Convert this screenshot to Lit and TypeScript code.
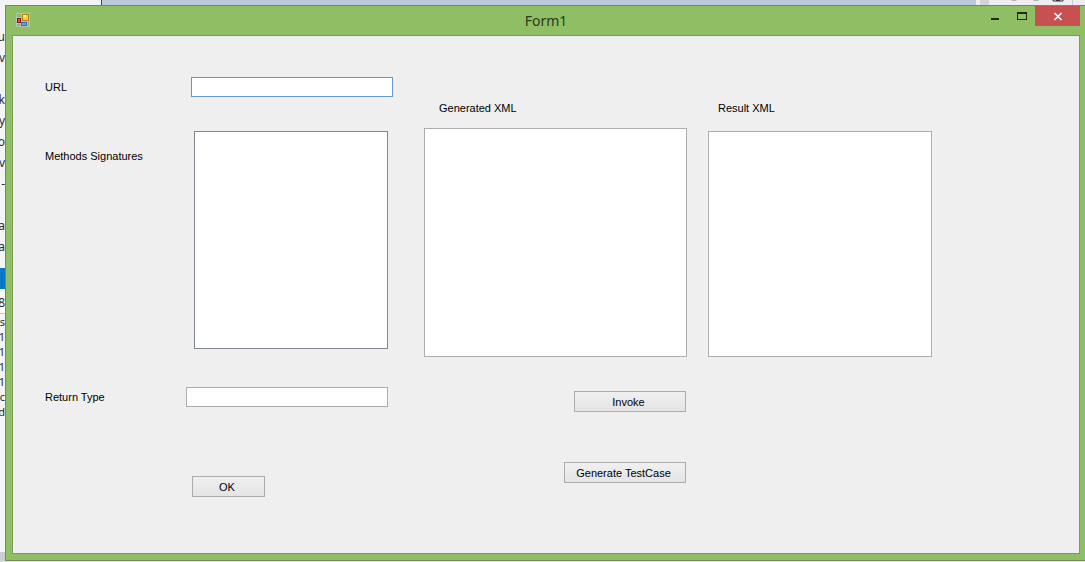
import { LitElement, html, css } from "lit";
import { customElement } from "lit/decorators.js";

@customElement("backdrop-edge")
class BackdropEdge extends LitElement {
  static styles = css`
    :host {
      display: flex;
      flex-direction: column;
      overflow: hidden;
      background: #f3f4f6;
      font: 12px/21px "Noto Sans", sans-serif;
      color: #2b2b33;
    }
    .menu {
      display: flex;
      flex-direction: column;
      align-items: flex-end;
      padding-top: 21px;
      height: 242px;
    }
    .line {
      height: 21px;
      white-space: pre;
    }
    .selected {
      height: 21px;
      background: #0a78c8;
    }
    .field {
      display: flex;
      justify-content: flex-end;
      height: 21px;
      margin-top: 3px;
      line-height: 21px;
      background: #ffffff;
      border-bottom: 1px solid #c8c8cc;
    }
    .log {
      display: flex;
      flex: 1;
      flex-direction: column;
      align-items: flex-end;
      line-height: 15px;
      font-size: 11px;
    }
    .log .line {
      height: 15px;
    }
    .status {
      height: 9px;
      background: #cbccd4;
    }
  `;

  render() {
    const menu = ["u", "v", " ", "k", "ry", "ro", "ov", "-", " ", "a", "a"];
    const log = ["s", "1", "1", "1", "1", "c", "d"];
    return html`
      <div class="menu">${menu.map((t) => html`<span class="line">${t}</span>`)}</div>
      <div class="selected"></div>
      <div class="field">8</div>
      <div class="log">${log.map((t) => html`<span class="line">${t}</span>`)}</div>
      <div class="status"></div>
    `;
  }
}

@customElement("title-bar")
class TitleBar extends LitElement {
  static styles = css`
    :host {
      display: grid;
      grid-template-columns: 1fr auto 1fr;
      align-items: start;
      height: 29px;
      padding-right: 5px;
    }
    .icon {
      display: block;
      margin: 7px 0 0 4px;
    }
    .title {
      margin: 0;
      font: 14px/30px "Noto Sans", sans-serif;
      color: #2b3a1c;
    }
    .controls {
      display: flex;
      justify-content: flex-end;
    }
    .control {
      width: 27px;
      height: 20px;
      padding: 0;
      border: 0;
      background: transparent;
    }
    .control svg {
      display: block;
      margin: 0 auto;
    }
    .close {
      width: 45px;
      background: #c75050;
    }
  `;

  render() {
    return html`
      <svg class="icon" width="14" height="14" viewBox="0 0 14 14" aria-hidden="true">
        <rect width="14" height="14" fill="#b9c4ae" />
        <rect x="1" y="1" width="4" height="3" fill="#8fb573" />
        <rect x="1" y="11" width="3" height="2" fill="#8fb573" />
        <rect x="12" y="9" width="1" height="4" fill="#8fb573" />
        <rect x="1.5" y="5.5" width="3" height="4" fill="#d05a50" stroke="#7c1a1a" />
        <rect x="6.5" y="1.5" width="6" height="6" fill="#f8cf3c" stroke="#b07c14" />
        <rect x="7" y="2" width="3" height="2" fill="#ffeb90" />
        <rect x="5.5" y="9.5" width="5" height="3" fill="#6aa4ee" stroke="#3468bc" />
      </svg>
      <h1 class="title">Form1</h1>
      <div class="controls">
        <button class="control" aria-label="Minimize">
          <svg width="27" height="20" viewBox="0 0 27 20"><rect x="10" y="12" width="8" height="2" fill="#1f2a14" /></svg>
        </button>
        <button class="control" aria-label="Maximize">
          <svg width="27" height="20" viewBox="0 0 27 20">
            <path d="M9 6H19V14H9ZM10 8V13H18V8Z" fill="#1f2a14" fill-rule="evenodd" />
          </svg>
        </button>
        <button class="control close" aria-label="Close">
          <svg width="45" height="20" viewBox="0 0 45 20">
            <path d="M19.500 7L26.500 14M26.500 7L19.500 14" stroke="#ffffff" stroke-width="1.600" />
          </svg>
        </button>
      </div>
    `;
  }
}

@customElement("request-form")
class RequestForm extends LitElement {
  static styles = css`
    :host {
      display: block;
      background: #efefef;
      border: 1px solid #7a9c58;
      font: 11px/16px "Liberation Sans", sans-serif;
      color: #000000;
    }
    .form {
      display: flex;
      align-items: flex-start;
      padding: 41px 32px;
    }
    .request {
      display: grid;
      grid-template-columns: 141px 1fr;
      width: 348px;
    }
    .column {
      display: flex;
      flex-direction: column;
      padding-top: 23px;
    }
    .generated {
      width: 263px;
      margin-left: 31px;
    }
    .result {
      width: 224px;
      margin-left: 21px;
    }
    label {
      align-self: start;
      padding-top: 2px;
    }
    .column label {
      padding: 0 0 12px 15px;
    }
    .column.result label {
      padding: 0 0 15px 10px;
    }
    input,
    select,
    textarea {
      box-sizing: border-box;
      margin: 0;
      padding: 2px;
      border: 1px solid #abadb3;
      border-radius: 0;
      background: #ffffff;
      font: inherit;
      outline: none;
      resize: none;
    }
    input {
      width: 202px;
      height: 20px;
    }
    .url {
      margin-left: 5px;
      border-color: #6299cc;
    }
    .methods-label {
      padding-top: 51px;
    }
    .methods {
      width: 194px;
      height: 218px;
      margin: 34px 0 0 8px;
      border-color: #828790;
    }
    .return-label,
    .return {
      margin-top: 38px;
    }
    .generated-xml {
      height: 229px;
    }
    .result-xml {
      height: 226px;
    }
    .button {
      box-sizing: border-box;
      height: 21px;
      padding: 0 3px 0 0;
      border: 1px solid #acacac;
      background: linear-gradient(#f0f0f0, #e4e4e4);
      color: inherit;
      font: inherit;
    }
    .ok {
      grid-column: 2;
      width: 73px;
      margin: 69px 0 0 6px;
    }
    .invoke {
      align-self: flex-end;
      width: 112px;
      margin: 34px 1px 0 0;
    }
    .generate {
      align-self: flex-end;
      width: 122px;
      margin: 50px 1px 0 0;
    }
  `;

  render() {
    return html`
      <form class="form" @submit=${(e: Event) => e.preventDefault()}>
        <div class="request">
          <label for="url">URL</label>
          <input class="url" id="url" type="text" />
          <label class="methods-label" for="methods">Methods Signatures</label>
          <select class="methods" id="methods" size="8"></select>
          <label class="return-label" for="return">Return Type</label>
          <input class="return" id="return" type="text" />
          <button class="button ok">OK</button>
        </div>
        <div class="column generated">
          <label for="generated">Generated XML</label>
          <textarea class="generated-xml" id="generated"></textarea>
          <button class="button invoke" type="button">Invoke</button>
          <button class="button generate" type="button">Generate TestCase</button>
        </div>
        <div class="column result">
          <label for="result">Result XML</label>
          <textarea class="result-xml" id="result"></textarea>
        </div>
      </form>
    `;
  }
}

@customElement("app-root")
class AppRoot extends LitElement {
  static styles = css`
    :host {
      display: grid;
      box-sizing: border-box;
      grid-template-columns: 5px 1fr;
      grid-template-rows: 5px 1fr 1px;
      min-height: 100vh;
      overflow: hidden;
      background: #dfe3e0;
    }
    .top {
      grid-column: 1 / -1;
      display: grid;
      grid-template-columns: 101px 1fr 109px;
    }
    .top-start {
      background: #f3f3f5;
    }
    .top-middle {
      background: #bccbdc;
      border-left: 1px solid #3c4654;
    }
    .top-end {
      display: block;
      background: #eeeef0;
    }
    .window {
      display: flex;
      flex-direction: column;
      box-sizing: border-box;
      padding: 0 5px 6px 6px;
      border: 1px solid #6f8f52;
      border-right: 0;
      background: #8fbe65;
    }
    .bar {
      margin-right: -5px;
    }
    .body {
      flex: 1;
    }
  `;

  render() {
    return html`
      <div class="top">
        <div class="top-start"></div>
        <div class="top-middle"></div>
        <svg class="top-end" width="109" height="5" viewBox="0 0 109 5" aria-hidden="true">
          <rect x="4" width="9" height="5" fill="#d3d3d6" />
          <path d="M35 0H41L40 1H36ZM57 0H63L62 1H58Z" fill="#b4b4b8" />
          <path d="M77 0V1H87V0" fill="none" stroke="#33333a" />
          <rect x="80" width="4" height="1" fill="#33333a" />
          <rect x="96" width="1" height="5" fill="#c4ccd4" />
        </svg>
      </div>
      <backdrop-edge></backdrop-edge>
      <main class="window">
        <title-bar class="bar"></title-bar>
        <request-form class="body"></request-form>
      </main>
    `;
  }
}
